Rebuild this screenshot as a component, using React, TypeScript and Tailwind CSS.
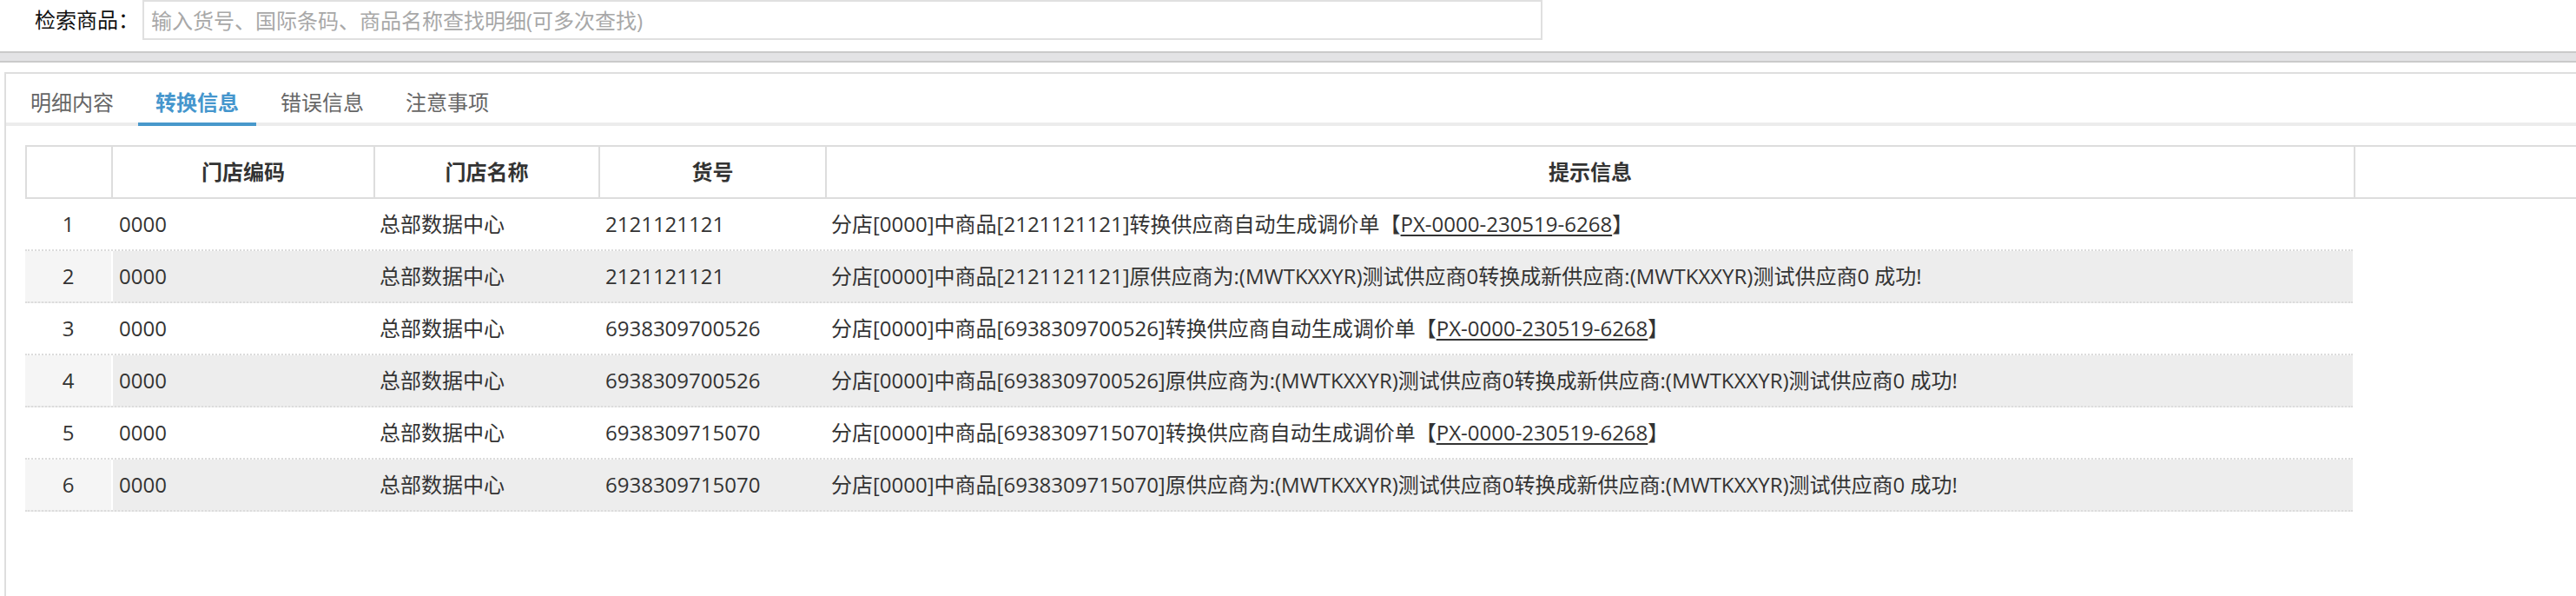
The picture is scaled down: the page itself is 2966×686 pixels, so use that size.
import React from "react"

const rows = [
  { code: "0000", name: "总部数据中心", sku: "2121121121", kind: "auto" },
  { code: "0000", name: "总部数据中心", sku: "2121121121", kind: "swap" },
  { code: "0000", name: "总部数据中心", sku: "6938309700526", kind: "auto" },
  { code: "0000", name: "总部数据中心", sku: "6938309700526", kind: "swap" },
  { code: "0000", name: "总部数据中心", sku: "6938309715070", kind: "auto" },
  { code: "0000", name: "总部数据中心", sku: "6938309715070", kind: "swap" },
]

const tabs = ["明细内容", "转换信息", "错误信息", "注意事项"]

function Message({ code, sku, kind }: { code: string; sku: string; kind: string }) {
  if (kind === "auto") {
    return (
      <span>
        分店[{code}]中商品[{sku}]转换供应商自动生成调价单【<span className="underline underline-offset-[3px]">PX-0000-230519-6268</span>】
      </span>
    )
  }
  return (
    <span>
      分店[{code}]中商品[{sku}]原供应商为:(MWTKXXYR)测试供应商0转换成新供应商:(MWTKXXYR)测试供应商0 成功!
    </span>
  )
}

export default function App() {
  return (
    <div
      className="w-[2966px] h-[686px] overflow-hidden bg-white text-[24px] text-[#333]"
      style={{ fontFamily: '"Open Sans", "Noto Sans CJK SC", sans-serif' }}
    >
      {/* search bar */}
      <div className="h-[59px] flex items-start pl-[40px]">
        <div className="h-[46px] w-[124px] flex items-center text-[#111]">检索商品：</div>
        <input
          className="h-[46px] w-[1612px] border-2 border-[#e0e0e0] px-[8px] text-[24px] outline-none placeholder:text-[#a8a8a8]"
          placeholder="输入货号、国际条码、商品名称查找明细(可多次查找)"
        />
      </div>
      <div className="h-[13px] border-y-2 border-[#cacaca] bg-[#e3e3e5]" />
      <div className="h-[11px]" />

      {/* panel */}
      <div className="ml-[5px] h-[603px] border-t-2 border-l-2 border-[#dedede]">
        <div className="flex gap-[8px] pl-[8px] border-b-4 border-[#ececec]">
          {tabs.map((t, i) => (
            <div
              key={t}
              className={
                i === 1
                  ? "w-[136px] h-[56px] pt-[10px] flex items-center justify-center font-bold text-[#4596cd] border-b-4 border-[#4898cb] -mb-[4px] h-[60px]"
                  : "w-[136px] h-[56px] pt-[10px] flex items-center justify-center text-[#666]"
              }
            >
              {t}
            </div>
          ))}
        </div>

        <div className="pl-[22px] pt-[22px]">
          {/* header */}
          <div className="flex h-[62px] border-y-2 border-l-2 border-[#dddddd] font-bold">
            <div className="w-[99px] border-r-2 border-[#dddddd]" />
            <div className="w-[302px] border-r-2 border-[#dddddd] flex items-center justify-center">门店编码</div>
            <div className="w-[259px] border-r-2 border-[#dddddd] flex items-center justify-center">门店名称</div>
            <div className="w-[261px] border-r-2 border-[#dddddd] flex items-center justify-center">货号</div>
            <div className="w-[1760px] border-r-2 border-[#dddddd] flex items-center justify-center">提示信息</div>
            <div className="flex-1" />
          </div>

          {/* body */}
          <div className="w-[2680px]">
            {rows.map((r, i) => {
              const even = i % 2 === 1
              return (
                <div
                  key={i}
                  className={
                    even
                      ? "flex h-[60px] border-b-2 border-dotted border-[#dcdcdc] bg-[#ededed]"
                      : "flex h-[60px] border-b-2 border-dotted border-[#dcdcdc] bg-white"
                  }
                >
                  <div
                    className={
                      even
                        ? "w-[101px] border-r-2 border-white bg-[#f5f5f5] flex items-center justify-center"
                        : "w-[101px] border-r-2 border-white flex items-center justify-center"
                    }
                  >
                    {i + 1}
                  </div>
                  <div className="w-[300px] pl-[7px] flex items-center">{r.code}</div>
                  <div className="w-[260px] pl-[7px] flex items-center">{r.name}</div>
                  <div className="w-[260px] pl-[7px] flex items-center">{r.sku}</div>
                  <div className="flex-1 pl-[7px] flex items-center whitespace-nowrap">
                    <Message code={r.code} sku={r.sku} kind={r.kind} />
                  </div>
                </div>
              )
            })}
          </div>
        </div>
      </div>
    </div>
  )
}
